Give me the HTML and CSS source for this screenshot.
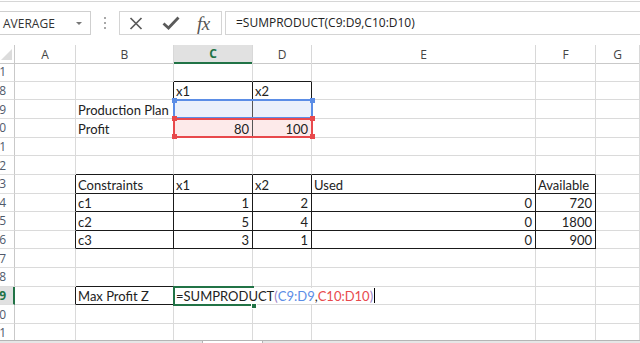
FILE: index.html
```html
<!DOCTYPE html>
<html>
<head>
  <link rel="stylesheet" href="styles.css">
</head>
<body>
  <div class="app">
    <div class="formula-bar">
      <div class="name-box">
        <span class="name-text">AVERAGE</span>
        <span class="name-arrow"></span>
      </div>
      <div class="grip"><i></i><i></i><i></i></div>
      <div class="fx-buttons">
        <svg class="fx-icon cancel" width="14" height="13" viewBox="0 0 14 13">
          <path d="M1.5 1 L12.5 12 M12.5 1 L1.5 12" fill="none" stroke="currentColor" stroke-width="1.7"></path>
        </svg>
        <svg class="fx-icon enter" width="18" height="14" viewBox="0 0 18 14">
          <path d="M1.5 7.5 L6.5 12 L16.5 1.5" fill="none" stroke="currentColor" stroke-width="2.8"></path>
        </svg>
        <span class="fx-label">fx</span>
      </div>
      <div class="formula-input">=SUMPRODUCT(C9:D9,C10:D10)</div>
    </div>

    <div class="sheet">
      <div class="row head">
        <div class="corner">
          <svg width="11" height="11" viewBox="0 0 11 11"><polygon points="11,0 11,11 0,11" fill="#dcdcdc"></polygon></svg>
        </div>
        <div class="col">A</div>
        <div class="col">B</div>
        <div class="col picked">C</div>
        <div class="col">D</div>
        <div class="col">E</div>
        <div class="col">F</div>
        <div class="col">G</div>
      </div>

      <div class="row first">
        <div class="rh"><span>1</span></div>
        <div class="c"></div><div class="c"></div><div class="c kb"></div><div class="c kb"></div><div class="c"></div><div class="c"></div><div class="c"></div>
      </div>
      <div class="row">
        <div class="rh"><span>8</span></div>
        <div class="c"></div><div class="c kr"></div><div class="c k">x1</div><div class="c k">x2</div><div class="c"></div><div class="c"></div><div class="c"></div>
      </div>
      <div class="row">
        <div class="rh"><span>9</span></div>
        <div class="c"></div>
        <div class="c kr">Production Plan</div>
        <div class="c blue kr">
          <div class="range range-blue"><i class="tl"></i><i class="tr"></i><i class="bl"></i><i class="br"></i></div>
        </div>
        <div class="c blue"></div>
        <div class="c"></div><div class="c"></div><div class="c"></div>
      </div>
      <div class="row">
        <div class="rh"><span>10</span></div>
        <div class="c"></div>
        <div class="c kr">Profit</div>
        <div class="c red n kr">80
          <div class="range range-red"><i class="tl"></i><i class="tr"></i><i class="bl"></i><i class="br"></i></div>
        </div>
        <div class="c red n">100</div>
        <div class="c"></div><div class="c"></div><div class="c"></div>
      </div>
      <div class="row">
        <div class="rh"><span>11</span></div>
        <div class="c"></div><div class="c"></div><div class="c"></div><div class="c"></div><div class="c"></div><div class="c"></div><div class="c"></div>
      </div>
      <div class="row">
        <div class="rh"><span>12</span></div>
        <div class="c"></div><div class="c kb"></div><div class="c kb"></div><div class="c kb"></div><div class="c kb"></div><div class="c kb"></div><div class="c"></div>
      </div>
      <div class="row">
        <div class="rh"><span>13</span></div>
        <div class="c kr"></div><div class="c k">Constraints</div><div class="c k">x1</div><div class="c k">x2</div><div class="c k">Used</div><div class="c k">Available</div><div class="c"></div>
      </div>
      <div class="row">
        <div class="rh"><span>14</span></div>
        <div class="c kr"></div><div class="c k">c1</div><div class="c k n">1</div><div class="c k n">2</div><div class="c k n">0</div><div class="c k n">720</div><div class="c"></div>
      </div>
      <div class="row">
        <div class="rh"><span>15</span></div>
        <div class="c kr"></div><div class="c k">c2</div><div class="c k n">5</div><div class="c k n">4</div><div class="c k n">0</div><div class="c k n">1800</div><div class="c"></div>
      </div>
      <div class="row">
        <div class="rh"><span>16</span></div>
        <div class="c kr"></div><div class="c k">c3</div><div class="c k n">3</div><div class="c k n">1</div><div class="c k n">0</div><div class="c k n">900</div><div class="c"></div>
      </div>
      <div class="row">
        <div class="rh"><span>17</span></div>
        <div class="c"></div><div class="c"></div><div class="c"></div><div class="c"></div><div class="c"></div><div class="c"></div><div class="c"></div>
      </div>
      <div class="row">
        <div class="rh"><span>18</span></div>
        <div class="c"></div><div class="c kb"></div><div class="c"></div><div class="c"></div><div class="c"></div><div class="c"></div><div class="c"></div>
      </div>
      <div class="row">
        <div class="rh picked"><span>19</span></div>
        <div class="c kr"></div>
        <div class="c k">Max Profit Z</div>
        <div class="c active">
          <div class="sel">
            <div class="editor">=SUMPRODUCT<span class="paren">(</span><span class="ref-blue">C9:D9</span>,<span class="ref-red">C10:D10</span><span class="paren">)</span><span class="caret"></span></div>
            <i class="handle"></i>
          </div>
        </div>
        <div class="c"></div><div class="c"></div><div class="c"></div><div class="c"></div>
      </div>
      <div class="row">
        <div class="rh"><span>20</span></div>
        <div class="c"></div><div class="c"></div><div class="c"></div><div class="c"></div><div class="c"></div><div class="c"></div><div class="c"></div>
      </div>
      <div class="row">
        <div class="rh"><span>21</span></div>
        <div class="c"></div><div class="c"></div><div class="c"></div><div class="c"></div><div class="c"></div><div class="c"></div><div class="c"></div>
      </div>
    </div>

    <div class="tabs"><div class="tab"></div></div>
  </div>
</body>
</html>
```

FILE: styles.css
```css
* {
  box-sizing: border-box;
}

body {
  margin: 0;
  background-color: #fff;
  font-family: 'Open Sans', Arial, sans-serif;
  overflow: hidden;
}

.app {
  height: 343px;
  display: flex;
  flex-direction: column;
}

/* formula bar */
.formula-bar {
  margin-top: 1px;
  height: 44px;
  border-top: 1px solid #d6d6d6;
  padding-top: 9px;
  display: flex;
  align-items: flex-start;
}

.name-box {
  width: 91px;
  height: 24px;
  border: 1px solid #cfcfcf;
  border-left: none;
  display: flex;
  align-items: center;
  padding-left: 3px;
  font-size: 12px;
  color: #333;
}

.name-text {
  flex: 1;
}

.name-arrow {
  width: 0;
  height: 0;
  border-left: 3px solid transparent;
  border-right: 3px solid transparent;
  border-top: 3px solid #777;
  margin-right: 8px;
}

.grip {
  width: 2px;
  margin-left: 13px;
  margin-top: 6px;
  display: flex;
  flex-direction: column;
  gap: 3px;
}

.grip i {
  display: block;
  width: 2px;
  height: 2px;
  background-color: #a8a8a8;
}

.fx-buttons {
  margin-left: 13px;
  width: 103px;
  height: 24px;
  border: 1px solid #d4d4d4;
  display: flex;
  align-items: center;
  color: #5a5a5a;
}

.fx-icon.cancel {
  margin-left: 9px;
}

.fx-icon.enter {
  margin-left: 19px;
}

.fx-label {
  margin-left: 17px;
  font-family: 'Liberation Serif', 'DejaVu Serif', serif;
  font-style: italic;
  font-size: 19px;
  line-height: 19px;
  letter-spacing: -0.5px;
  color: #555;
}

.formula-input {
  flex: 1;
  margin-left: 3px;
  height: 24px;
  border: 1px solid #d4d4d4;
  border-right: none;
  padding-left: 10px;
  font-size: 12px;
  line-height: 22px;
  color: #222;
  white-space: nowrap;
}

/* sheet */
.sheet {
  flex: 1;
  overflow: hidden;
}

.row {
  display: grid;
  grid-template-columns: 15px 61px 98px 79px 59px 224px 60px 44px;
  height: 18.65px;
}

.row.head {
  height: 17px;
}

.row.first {
  height: 19.7px;
}

.corner {
  border-right: 1px solid #c9c9c9;
  border-bottom: 1px solid #c9c9c9;
  display: flex;
  align-items: flex-end;
  justify-content: flex-end;
  padding: 0 2px 3px 0;
}

.col {
  border-right: 1px solid #d8d8d8;
  border-bottom: 1px solid #c9c9c9;
  display: flex;
  align-items: center;
  justify-content: center;
  font-size: 12px;
  color: #444;
}

.col.picked {
  background-color: #e1e1e1;
  color: #217346;
  font-weight: 700;
  border-bottom: 2px solid #217346;
}

.rh {
  border-right: 1px solid #c9c9c9;
  border-bottom: 1px solid #dedede;
  display: flex;
  align-items: center;
  justify-content: flex-end;
  padding-right: 8px;
  font-size: 12px;
  color: #4f5a6b;
}

.rh.picked {
  background-color: #e1e1e1;
  border-right: 2px solid #217346;
  color: #217346;
  font-weight: 700;
  padding-right: 7px;
}

.c {
  position: relative;
  border-right: 1px solid #dadada;
  border-bottom: 1px solid #dadada;
  padding: 0 2px;
  display: flex;
  align-items: flex-end;
  font-family: Lato, 'Liberation Sans', sans-serif;
  font-size: 13px;
  line-height: 16px;
  color: #222;
  white-space: nowrap;
}

.c.n {
  justify-content: flex-end;
  padding-right: 3px;
}

.c.k {
  border-right-color: #1a1a1a;
  border-bottom-color: #1a1a1a;
}

.c.kb {
  border-bottom-color: #1a1a1a;
}

.c.kr {
  border-right-color: #1a1a1a;
}

.c.blue {
  background-color: #eaf0fb;
}

.c.red {
  background-color: #fdeaea;
}

.c.blue.kr,
.c.red.kr {
  border-right-color: #555;
}

/* reference ranges */
.range {
  position: absolute;
  left: -1px;
  top: -1px;
  width: 140px;
  height: 20px;
  border: 2px solid;
  pointer-events: none;
  z-index: 2;
}

.range-blue {
  border-color: #5b8de6;
}

.range-red {
  border-color: #e8494c;
  z-index: 3;
}

.range i {
  position: absolute;
  width: 5px;
  height: 5px;
}

.range-blue i {
  background-color: #5b8de6;
}

.range-red i {
  background-color: #e8494c;
}

.range .tl { left: -3.5px; top: -3.5px; }
.range .tr { right: -3.5px; top: -3.5px; }
.range .bl { left: -3.5px; bottom: -3.5px; }
.range .br { right: -3.5px; bottom: -3.5px; }

/* active cell being edited */
.sel {
  position: absolute;
  left: -1px;
  top: -1px;
  right: -2px;
  bottom: -2px;
  border: 2px solid #217346;
  z-index: 4;
}

.editor {
  position: absolute;
  left: 0;
  top: 0;
  bottom: 0;
  width: 190px;
  background-color: #fff;
  padding: 0 0 0 1px;
  display: flex;
  align-items: flex-end;
  line-height: 16px;
  color: #222;
}

.paren {
  color: #9a80c6;
}

.ref-blue {
  color: #5b8de6;
}

.ref-red {
  color: #e8494c;
}

.caret {
  flex-shrink: 0;
  width: 1px;
  height: 15px;
  margin-left: 1px;
  margin-bottom: 1px;
  background-color: #000;
}

.handle {
  position: absolute;
  right: -5px;
  bottom: -5px;
  width: 6px;
  height: 6px;
  background-color: #217346;
  border: 1px solid #fff;
}

/* sheet tab strip */
.tabs {
  height: 3px;
  border-top: 1px solid #b5b5b5;
  background-color: #e6e6e6;
  display: flex;
}

.tab {
  margin-left: 202px;
  width: 61px;
  background-color: #fff;
  border-left: 1px solid #b5b5b5;
  border-right: 1px solid #b5b5b5;
}
```
